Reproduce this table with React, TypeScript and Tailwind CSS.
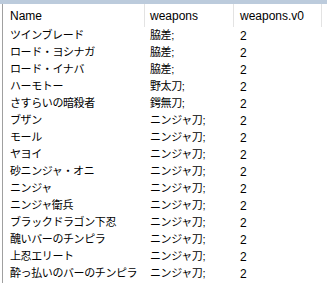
const rows: [string, string][] = [
  ['ツインブレード', '脇差;'],
  ['ロード・ヨシナガ', '脇差;'],
  ['ロード・イナバ', '脇差;'],
  ['ハーモトー', '野太刀;'],
  ['さすらいの暗殺者', '鍔無刀;'],
  ['ブザン', 'ニンジャ刀;'],
  ['モール', 'ニンジャ刀;'],
  ['ヤヨイ', 'ニンジャ刀;'],
  ['砂ニンジャ・オニ', 'ニンジャ刀;'],
  ['ニンジャ', 'ニンジャ刀;'],
  ['ニンジャ衛兵', 'ニンジャ刀;'],
  ['ブラックドラゴン下忍', 'ニンジャ刀;'],
  ['醜いバーのチンピラ', 'ニンジャ刀;'],
  ['上忍エリート', 'ニンジャ刀;'],
  ['酔っ払いのバーのチンピラ', 'ニンジャ刀;'],
];

export default function App() {
  return (
    <div
      className="w-[327px] h-[283px] overflow-hidden bg-white text-black text-[12px]"
      style={{ fontFamily: '"Liberation Sans", "Noto Sans CJK JP", sans-serif' }}
    >
      <div className="h-[4px] bg-[#bccbdc]" />
      <div className="flex h-[279px] pl-[2px]">
        <div className="w-[1px] bg-[#a0a0a0]" />
        <div className="flex-1 flex flex-col">
          <div className="flex h-[23px] items-center">
            <div className="w-[142px] pl-[7px] border-r border-[#e3e3e3] h-full flex items-center">Name</div>
            <div className="w-[89px] pl-[5px] border-r border-[#e3e3e3] h-full flex items-center">weapons</div>
            <div className="w-[88px] pl-[6px] border-r border-[#e3e3e3] h-full flex items-center">weapons.v0</div>
          </div>
          {rows.map(([name, w], i) => (
            <div key={i} className="flex h-[17px] items-center whitespace-nowrap">
              <div className="w-[142px] pl-[7px] text-[11px] tracking-[-0.4px] overflow-hidden">{name}</div>
              <div className="w-[89px] pl-[5px] text-[11px] tracking-[-0.4px]">{w}</div>
              <div className="w-[88px] pl-[6px]">2</div>
            </div>
          ))}
        </div>
      </div>
    </div>
  );
}
